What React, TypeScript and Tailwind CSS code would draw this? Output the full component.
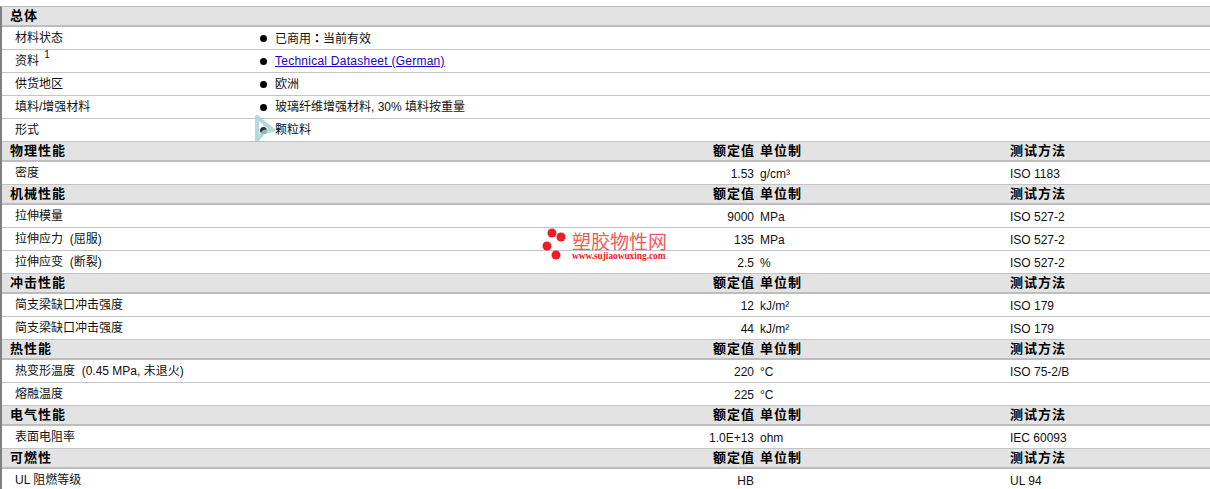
type Row = { name: React.ReactNode; value?: string; unit?: string; test?: string };
type Section = { title: string; rows: Row[] };

const FONT = "font-['Liberation_Sans','Noto_Sans_CJK_SC',sans-serif]";

const GENERAL: { name: React.ReactNode; value: React.ReactNode }[] = [
  {
    name: "材料状态",
    value: (
      <>
        已商用<span className="font-['Noto_Sans_CJK_TC',sans-serif] font-bold">：</span>当前有效
      </>
    ),
  },
  {
    name: (
      <>
        资料 <sup className="relative -top-[2px] ml-[2px] text-[10px] leading-none align-super">1</sup>
      </>
    ),
    value: <a href="#datasheet" className="text-[#2200cc] underline tracking-[0.25px]">Technical Datasheet (German)</a>,
  },
  { name: "供货地区", value: "欧洲" },
  { name: "填料/增强材料", value: "玻璃纤维增强材料, 30% 填料按重量" },
  { name: "形式", value: "颗粒料" },
];

const SECTIONS: Section[] = [
  { title: "物理性能", rows: [{ name: "密度", value: "1.53", unit: "g/cm³", test: "ISO 1183" }] },
  {
    title: "机械性能",
    rows: [
      { name: "拉伸模量", value: "9000", unit: "MPa", test: "ISO 527-2" },
      { name: "拉伸应力\u00a0\u00a0(屈服)", value: "135", unit: "MPa", test: "ISO 527-2" },
      { name: "拉伸应变\u00a0\u00a0(断裂)", value: "2.5", unit: "%", test: "ISO 527-2" },
    ],
  },
  {
    title: "冲击性能",
    rows: [
      { name: "简支梁缺口冲击强度", value: "12", unit: "kJ/m²", test: "ISO 179" },
      { name: "简支梁缺口冲击强度", value: "44", unit: "kJ/m²", test: "ISO 179" },
    ],
  },
  {
    title: "热性能",
    rows: [
      { name: "热变形温度\u00a0\u00a0(0.45 MPa, 未退火)", value: "220", unit: "°C", test: "ISO 75-2/B" },
      { name: "熔融温度", value: "225", unit: "°C" },
    ],
  },
  { title: "电气性能", rows: [{ name: "表面电阻率", value: "1.0E+13", unit: "ohm", test: "IEC 60093" }] },
  { title: "可燃性", rows: [{ name: "UL 阻燃等级", value: "HB", test: "UL 94" }] },
];

const HeadCell = ({ className, children }: { className?: string; children?: React.ReactNode }) => (
  <div className={`text-[13px] font-bold tracking-[1px] text-black whitespace-nowrap ${className ?? ""}`}>{children}</div>
);

const SectionHeader = ({ title, columns }: { title: string; columns?: boolean }) => (
  <div className="flex h-[20px] items-center border-b-2 border-[#bdbdbd] bg-[#e3e3e3] pl-[8px]">
    <HeadCell className="w-[640px]">{title}</HeadCell>
    {columns && (
      <>
        <HeadCell className="w-[105px] text-right">额定值</HeadCell>
        <HeadCell className="ml-[5px] w-[250px]">单位制</HeadCell>
        <HeadCell>测试方法</HeadCell>
      </>
    )}
  </div>
);

const PropertyRow = ({ row }: { row: Row }) => (
  <div className="flex h-[23px] items-center border-b border-[#c4c4c4] pl-[13px] text-[12px] text-[#111]">
    <div className="w-[635px] whitespace-nowrap">{row.name}</div>
    <div className="w-[104px] pt-[2px] text-right">{row.value}</div>
    <div className="ml-[6px] w-[250px] pt-[2px]">{row.unit}</div>
    <div className="pt-[2px]">{row.test}</div>
  </div>
);

const Cursor = () => (
  <svg className="absolute left-[250px] top-[111px]" width="30" height="36" viewBox="0 0 30 36">
    <path
      d="M7 6 L23 19 L14 21 L7 29 Z"
      fill="#e8f4f4"
      fillOpacity="0.2"
      stroke="#a5d3d3"
      strokeOpacity="0.85"
      strokeWidth="4"
      strokeLinejoin="round"
    />
  </svg>
);

const Watermark = () => (
  <div className="absolute left-[542px] top-[226px] flex items-start gap-[6px]">
    <svg width="24" height="36" viewBox="0 0 24 36" className="shrink-0">
      <circle cx="10" cy="7" r="4.5" fill="#ee1c25" />
      <circle cx="19" cy="11" r="4.5" fill="#ee1c25" />
      <circle cx="5" cy="20" r="4.5" fill="#ee1c25" />
      <circle cx="14" cy="29" r="4.5" fill="#ee1c25" />
    </svg>
    <div className="flex flex-col pt-[7px]">
      <div className="text-[19px] leading-[20px] text-[#ef5a5a] whitespace-nowrap">塑胶物性网</div>
      <div className="font-['Liberation_Serif',serif] text-[9.3px] font-bold leading-[7px] text-[#ee1c25] whitespace-nowrap">
        www.sujiaowuxing.com
      </div>
    </div>
  </div>
);

export default function App() {
  return (
    <div className={`relative h-[489px] w-[1210px] overflow-hidden bg-white ${FONT}`}>
      <div className="mt-[6px] border-l-2 border-t border-[#bdbdbd] border-l-[#808080]">
        <SectionHeader title="总体" />
        {GENERAL.map((row, i) => (
          <div key={i} className="flex h-[23px] items-center border-b border-[#c4c4c4] pl-[13px] text-[12px] text-[#111]">
            <div className="w-[245px] whitespace-nowrap">{row.name}</div>
            <div className="h-[7px] w-[7px] rounded-full bg-black" />
            <div className="ml-[8px] whitespace-nowrap">{row.value}</div>
          </div>
        ))}
        {SECTIONS.map((section) => (
          <div key={section.title}>
            <SectionHeader title={section.title} columns />
            {section.rows.map((row, i) => (
              <PropertyRow key={i} row={row} />
            ))}
          </div>
        ))}
      </div>
      <Cursor />
      <Watermark />
    </div>
  );
}
